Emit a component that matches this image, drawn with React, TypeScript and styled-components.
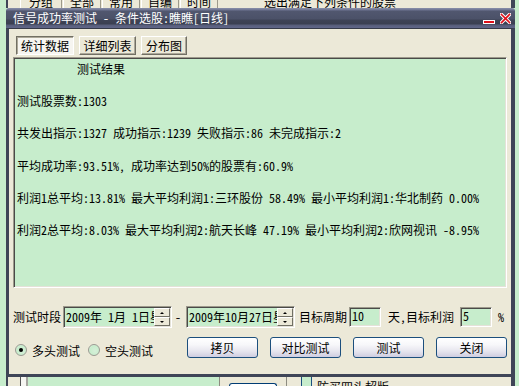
import styled, { createGlobalStyle } from "styled-components"

const FONT = `"Noto Sans Mono CJK SC", "Noto Sans CJK SC", "Liberation Mono", monospace`

const GlobalStyle = createGlobalStyle`
  html, body {
    margin: 0;
    padding: 0;
    background: #c7edcc;
  }
  body {
    font-family: ${FONT};
    font-size: 12px;
    color: #000;
  }
  * {
    box-sizing: border-box;
  }
`

const Page = styled.div`
  width: 519px;
  height: 386px;
  overflow: hidden;
  background: #c7edcc;
  padding-left: 6px;
`

const Frame = styled.div`
  width: 509px;
  height: 386px;
  display: flex;
  flex-direction: column;
`

/* app behind the dialog */
const TopStrip = styled.div`
  height: 8px;
  flex: none;
  display: flex;
  background: #ece9d8;
  border-left: 2px solid #3f4557;
  border-right: 4px solid #3f4557;
  padding-left: 12px;
  overflow: hidden;
`

const BackTab = styled.div<{ $w: number }>`
  width: ${(p) => p.$w}px;
  height: 22px;
  margin-top: -9px;
  line-height: 22px;
  text-align: center;
  border-left: 1px solid #fff;
  border-right: 1px solid #9d9a8c;
  margin-right: 1px;
  flex: none;
`

const HintText = styled.div`
  margin-left: 45px;
  margin-top: -9px;
  line-height: 22px;
  white-space: nowrap;
`

const BottomStrip = styled.div`
  height: 9px;
  flex: none;
  display: flex;
  background: #ece9d8;
  border-left: 2px solid #3f4557;
  border-right: 4px solid #3f4557;
  padding-left: 12px;
  overflow: hidden;
`

const ScrollEdge = styled.div`
  width: 8px;
  border-left: 1px solid #555;
  border-right: 2px solid #a7a6a0;
  background: #f6f6f2;
`

const ListArea = styled.div`
  width: 192px;
  background: #c7edcc;
  border-right: 1px solid #8d8b80;
`

const PeekButton = styled.div`
  width: 48px;
  margin-left: 9px;
  margin-top: 6px;
  border: 1px solid #003c74;
  border-bottom: none;
  border-radius: 3px 3px 0 0;
  background: #fff;
`

const VLine = styled.div`
  width: 1px;
  margin-left: 9px;
  background: #8d8b80;
`

const PeekCheck = styled.div`
  width: 11px;
  height: 11px;
  margin-left: 14px;
  margin-top: -1px;
  border: 1px solid #1c5180;
  background: #c7edcc;
`

const PeekLabel = styled.div`
  margin-left: 5px;
  margin-top: 3px;
  line-height: 14px;
  white-space: nowrap;
`

/* dialog */
const Window = styled.div`
  flex: 1;
  display: flex;
  flex-direction: column;
`

const TitleBar = styled.div`
  height: 20px;
  flex: none;
  display: flex;
  align-items: center;
  padding: 0 4px 0 7px;
  border-radius: 3px 3px 0 0;
  background: linear-gradient(
    to bottom,
    #8a90aa 0px,
    #6e7492 2px,
    #51576f 3px,
    #4b5168 11px,
    #3e4356 12px,
    #3a3f51 16px,
    #575d79 17px,
    #60668a 20px
  );
`

const Title = styled.div`
  color: #fff;
  line-height: 20px;
  white-space: nowrap;
`

const Controls = styled.div`
  margin-left: auto;
  display: flex;
  align-items: flex-end;
  gap: 5px;
  height: 11px;
  margin-top: 1px;
`

const Body = styled.div`
  flex: 1;
  display: flex;
  flex-direction: column;
  background: #ece9d8;
  border-top: 1px solid #363a48;
  border-left: 3px solid #3f4557;
  border-right: 4px solid #3f4557;
  border-bottom: 3px solid #3f4557;
  padding: 7px 4px 0 4px;
`

const TabRow = styled.div`
  display: flex;
  gap: 5px;
  margin-left: 3px;
  height: 19px;
`

const TabButton = styled.div<{ $w: number; $active?: boolean }>`
  width: ${(p) => p.$w}px;
  height: 19px;
  line-height: 17px;
  text-align: center;
  border: 1px solid;
  border-color: ${(p) =>
    p.$active ? "#716f64 #ffffff #ffffff #716f64" : "#ffffff #716f64 #716f64 #ffffff"};
  box-shadow: ${(p) =>
    p.$active ? "inset 1px 1px 0 #aca899" : "inset -1px -1px 0 #aca899"};
  background: ${(p) => (p.$active ? "#f6f5f0" : "#ece9d8")};
`

const Panel = styled.div`
  margin-top: 2px;
  height: 231px;
  border: 1px solid;
  border-color: #9d9a8c #ffffff #ffffff #9d9a8c;
  box-shadow: inset 1px 1px 0 #4a4a48, inset -1px -1px 0 #e4e2d8;
  background: #c7edcc;
  padding: 3px 2px 0 3px;
  display: flex;
  flex-direction: column;
  gap: 16.2px;
`

const Line = styled.div<{ $indent?: number }>`
  line-height: 16px;
  height: 16px;
  white-space: pre;
  padding-left: ${(p) => p.$indent || 0}px;
`

const Row = styled.div<{ $top: number; $h: number }>`
  display: flex;
  align-items: center;
  margin-top: ${(p) => p.$top}px;
  height: ${(p) => p.$h}px;
`

const Label = styled.span<{ $ml?: number }>`
  margin-left: ${(p) => p.$ml || 0}px;
  white-space: pre;
  line-height: 16px;
  flex: none;
`

const Sunken = styled.div<{ $w: number; $h: number; $ml: number }>`
  width: ${(p) => p.$w}px;
  height: ${(p) => p.$h}px;
  margin-left: ${(p) => p.$ml}px;
  flex: none;
  display: flex;
  border: 1px solid;
  border-color: #9d9a8c #ffffff #ffffff #9d9a8c;
  box-shadow: inset 1px 1px 0 #4a4a48, inset -1px -1px 0 #e4e2d8;
  background: #c7edcc;
  padding: 1px;
`

const FieldText = styled.div<{ $top?: boolean }>`
  flex: 1;
  overflow: hidden;
  white-space: pre;
  line-height: ${(p) => (p.$top ? "14px" : "18px")};
  padding-left: 1px;
`

const Spinner = styled.div`
  width: 16px;
  display: flex;
  flex-direction: column;
`

const SpinBtn = styled.div<{ $down?: boolean }>`
  flex: 1;
  display: flex;
  align-items: center;
  justify-content: center;
  background: #ece9d8;
  border: 1px solid;
  border-color: #ffffff #716f64 #716f64 #ffffff;

  &::after {
    content: "";
    border-left: 2px solid transparent;
    border-right: 2px solid transparent;
    ${(p) => (p.$down ? "border-top: 2px solid #000;" : "border-bottom: 2px solid #000;")}
  }
`

const RadioGroup = styled.label<{ $ml: number }>`
  display: flex;
  align-items: center;
  margin-left: ${(p) => p.$ml}px;
  margin-top: 5px;
  gap: 5px;
  flex: none;
`

const RadioDot = styled.span<{ $checked?: boolean }>`
  width: 12px;
  height: 12px;
  border-radius: 50%;
  border: 1px solid #9a9a92;
  background: radial-gradient(circle at 60% 60%, #d6efd9 0, #c7edcc 60%, #eef6ee 100%);
  display: flex;
  align-items: center;
  justify-content: center;

  &::after {
    content: "";
    width: 4px;
    height: 4px;
    border-radius: 50%;
    background: ${(p) => (p.$checked ? "#000" : "transparent")};
  }
`

const ButtonBar = styled.div`
  margin-left: 34px;
  display: flex;
  gap: 12px;
`

const PushButton = styled.button`
  width: 71px;
  height: 21px;
  padding: 0;
  font: inherit;
  color: #000;
  line-height: 19px;
  border: 1px solid #1c4f7d;
  border-radius: 3px;
  background: linear-gradient(
    to bottom,
    #ffffff 0%,
    #f7f7fa 35%,
    #e6e5ee 70%,
    #cfcde0 100%
  );
`

function CloseIcon() {
  return (
    <svg width="11" height="11" viewBox="0 0 11 11">
      <path d="M1.5 1.5 L9.5 9.5 M9.5 1.5 L1.5 9.5" stroke="#fff" strokeWidth="3.6" strokeLinecap="square" />
      <path d="M1.5 1.5 L9.5 9.5 M9.5 1.5 L1.5 9.5" stroke="#e0101a" strokeWidth="1.6" strokeLinecap="square" />
    </svg>
  )
}

function MinIcon() {
  return (
    <svg width="12" height="4" viewBox="0 0 12 4">
      <rect x="0" y="0" width="12" height="4" fill="#fff" />
      <rect x="1" y="1" width="10" height="2" fill="#e0101a" />
    </svg>
  )
}

function DateField({ text, ml }: { text: string; ml: number }) {
  return (
    <Sunken $w={109} $h={22} $ml={ml}>
      <FieldText>{text}</FieldText>
      <Spinner>
        <SpinBtn />
        <SpinBtn $down />
      </Spinner>
    </Sunken>
  )
}

const lines = [
  "测试股票数:1303",
  "共发出指示:1327 成功指示:1239 失败指示:86 未完成指示:2",
  "平均成功率:93.51%, 成功率达到50%的股票有:60.9%",
  "利润1总平均:13.81% 最大平均利润1:三环股份 58.49% 最小平均利润1:华北制药 0.00%",
  "利润2总平均:8.03% 最大平均利润2:航天长峰 47.19% 最小平均利润2:欣网视讯 -8.95%",
]

export default function App() {
  return (
    <>
      <GlobalStyle />
      <Page>
        <Frame>
          <TopStrip>
            <BackTab $w={42}>分组</BackTab>
            <BackTab $w={38}>全部</BackTab>
            <BackTab $w={38}>常用</BackTab>
            <BackTab $w={38}>自编</BackTab>
            <BackTab $w={38}>时间</BackTab>
            <HintText>选出满足下列条件的股票</HintText>
          </TopStrip>
          <Window>
            <TitleBar>
              <Title>信号成功率测试 - 条件选股:瞧瞧[日线]</Title>
              <Controls>
                <MinIcon />
                <CloseIcon />
              </Controls>
            </TitleBar>
            <Body>
              <TabRow>
                <TabButton $w={58} $active>
                  统计数据
                </TabButton>
                <TabButton $w={57}>详细列表</TabButton>
                <TabButton $w={46}>分布图</TabButton>
              </TabRow>
              <Panel>
                <Line $indent={60}>测试结果</Line>
                {lines.map((l) => (
                  <Line key={l}>{l}</Line>
                ))}
              </Panel>
              <Row $top={18} $h={22}>
                <Label>测试时段</Label>
                <DateField text="2009年 1月 1日星" ml={2} />
                <Label $ml={3}>-</Label>
                <DateField text="2009年10月27日星" ml={5} />
                <Label $ml={4}>目标周期</Label>
                <Sunken $w={32} $h={20} $ml={2}>
                  <FieldText $top>10</FieldText>
                </Sunken>
                <Label $ml={7}>天,目标利润</Label>
                <Sunken $w={32} $h={20} $ml={6}>
                  <FieldText $top>5</FieldText>
                </Sunken>
                <Label $ml={6}>%</Label>
              </Row>
              <Row $top={9} $h={21}>
                <RadioGroup $ml={2}>
                  <RadioDot $checked />
                  多头测试
                </RadioGroup>
                <RadioGroup $ml={8}>
                  <RadioDot />
                  空头测试
                </RadioGroup>
                <ButtonBar>
                  <PushButton>拷贝</PushButton>
                  <PushButton>对比测试</PushButton>
                  <PushButton>测试</PushButton>
                  <PushButton>关闭</PushButton>
                </ButtonBar>
              </Row>
            </Body>
          </Window>
          <BottomStrip>
            <ScrollEdge />
            <ListArea />
            <PeekButton />
            <VLine />
            <PeekCheck />
            <PeekLabel>防买四头超版</PeekLabel>
          </BottomStrip>
        </Frame>
      </Page>
    </>
  )
}
